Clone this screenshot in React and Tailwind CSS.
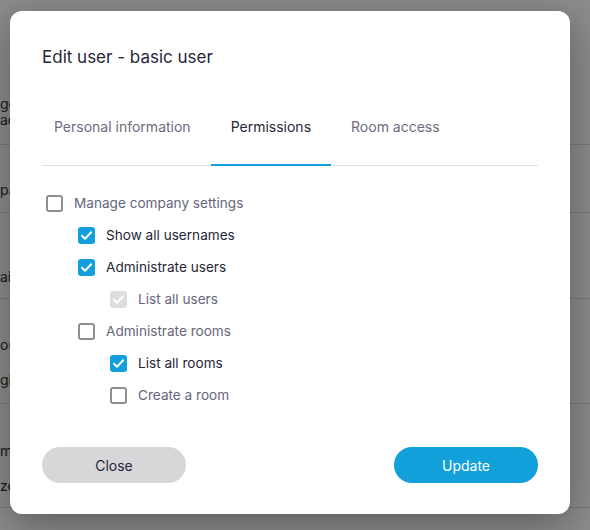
import React from "react";

const font = { fontFamily: "Inter, 'Noto Sans', sans-serif" };

const permissions = [
  { label: "Manage company settings", level: 0, state: "off" },
  { label: "Show all usernames", level: 1, state: "on" },
  { label: "Administrate users", level: 1, state: "on" },
  { label: "List all users", level: 2, state: "locked" },
  { label: "Administrate rooms", level: 1, state: "off" },
  { label: "List all rooms", level: 2, state: "on" },
  { label: "Create a room", level: 2, state: "off" },
];

const indent = ["pl-0", "pl-8", "pl-16"];

const Tick = () => (
  <svg width="13" height="13" viewBox="0 0 14 14" fill="none">
    <path d="M2.2 7.4l3.2 3.1L11.9 3.6" stroke="white" strokeWidth="2.2" strokeLinecap="round" strokeLinejoin="round" />
  </svg>
);

const Box = ({ state }) => {
  if (state === "on")
    return (
      <span className="flex h-[17px] w-[17px] items-center justify-center rounded-[3px] bg-[#129fdb]">
        <Tick />
      </span>
    );
  if (state === "locked")
    return (
      <span className="flex h-[17px] w-[17px] items-center justify-center rounded-[3px] bg-[#dededf]">
        <Tick />
      </span>
    );
  return <span className="h-[17px] w-[17px] rounded-[3px] border-2 border-[#8e8e93]" />;
};

// page behind the backdrop, only its left edge peeks out
const BackgroundPage = () => (
  <div className="flex flex-col bg-white text-sm text-[#333]">
    <div className="h-[145px] border-b border-[#dcdcdc] pt-[96px] leading-4">
      <p>ge</p>
      <p>ad</p>
    </div>
    <div className="h-[68px] border-b border-[#dcdcdc] pt-[35px]">
      <p>pa</p>
    </div>
    <div className="h-[86px] border-b border-[#dcdcdc] pt-[54px]">
      <p>ai</p>
    </div>
    <div className="h-[105px] border-b border-[#dcdcdc] pt-[28px] leading-[35px]">
      <p>ou</p>
      <p>gi</p>
    </div>
    <div className="h-[104px] border-b border-[#dcdcdc] pt-[29px] leading-[35px]">
      <p>ma</p>
      <p>ze</p>
    </div>
  </div>
);

export default function App() {
  return (
    <div className="relative h-[530px] w-[590px] overflow-hidden" style={font}>
      <BackgroundPage />
      <div className="absolute inset-0 bg-black/45 pl-[10px] pt-[11px]">
        <div className="flex h-[503px] w-[560px] flex-col rounded-xl bg-white px-8 pt-8 shadow-[0_10px_40px_rgba(0,0,0,0.35)]">
          <h2 className="text-[17px] leading-7 text-[#262637]">Edit user - basic user</h2>

          <div className="mt-[34px] flex border-b border-[#e2e2e4] text-sm leading-5">
            <button className="-mb-px border-b-2 border-transparent pb-[27px] pl-3 pr-5 pt-3 text-[#6c6c7c]">
              Personal information
            </button>
            <button className="-mb-px border-b-2 border-[#129fdb] px-5 pb-[27px] pt-3 text-[#262637]">
              Permissions
            </button>
            <button className="-mb-px border-b-2 border-transparent px-5 pb-[27px] pt-3 text-[#6c6c7c]">
              Room access
            </button>
          </div>

          <ul className="mt-[21px] flex flex-col text-[13.6px]">
            {permissions.map((p) => (
              <li key={p.label} className={`flex h-8 items-center gap-2 ${indent[p.level]}`}>
                <span className="flex w-6 justify-center">
                  <Box state={p.state} />
                </span>
                <span className={p.state === "on" ? "text-[#262637]" : "text-[#66667a]"}>{p.label}</span>
              </li>
            ))}
          </ul>

          <div className="mt-9 flex justify-between text-sm">
            <button className="h-9 w-[144px] rounded-full bg-[#d7d7da] pt-0.5 text-[#262637]">Close</button>
            <button className="h-9 w-[144px] rounded-full bg-[#12a0db] pt-0.5 text-white">Update</button>
          </div>
        </div>
      </div>
    </div>
  );
}
